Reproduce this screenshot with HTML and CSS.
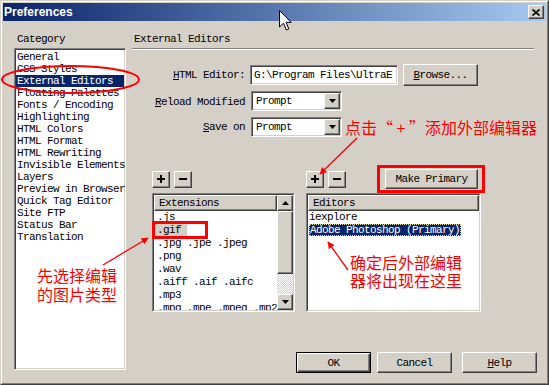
FILE: index.html
```html
<!DOCTYPE html>
<html>
<head>
<meta charset="utf-8">
<link rel="stylesheet" href="styles.css">
</head>
<body>
<div class="window">
  <div class="frame">
    <div class="titlebar">
      <span class="title">Preferences</span>
      <span class="close raised"><svg width="8" height="7" viewBox="0 0 8 7"><path d="M0.5 0.5L7.5 6.5M7.5 0.5L0.5 6.5" stroke="#000" stroke-width="1.6"/></svg></span>
    </div>
    <div class="content">
      <div class="left">
        <div class="label">Category</div>
        <div class="catlist">
          <div class="item">General</div>
          <div class="item">CSS Styles</div>
          <div class="item sel">External Editors</div>
          <div class="item">Floating Palettes</div>
          <div class="item">Fonts / Encoding</div>
          <div class="item">Highlighting</div>
          <div class="item">HTML Colors</div>
          <div class="item">HTML Format</div>
          <div class="item">HTML Rewriting</div>
          <div class="item">Invisible Elements</div>
          <div class="item">Layers</div>
          <div class="item">Preview in Browser</div>
          <div class="item">Quick Tag Editor</div>
          <div class="item">Site FTP</div>
          <div class="item">Status Bar</div>
          <div class="item">Translation</div>
        </div>
      </div>
      <div class="right">
        <div class="heading">External Editors</div>
        <div class="sep"></div>
        <div class="form">
          <div class="flabel"><u>H</u>TML Editor:</div>
          <div class="fctrl">
            <div class="input sunken">G:\Program Files\UltraE</div>
            <div class="btn raised browse"><u>B</u>rowse...</div>
          </div>
          <div class="flabel"><u>R</u>eload Modified</div>
          <div class="fctrl top">
            <div class="select sunken"><span>Prompt</span><span class="arrowbtn raised"><svg width="7" height="4" viewBox="0 0 7 4"><polygon points="0,0 7,0 3.5,4" fill="#000"/></svg></span></div>
          </div>
          <div class="flabel"><u>S</u>ave on</div>
          <div class="fctrl">
            <div class="select sunken"><span>Prompt</span><span class="arrowbtn raised"><svg width="7" height="4" viewBox="0 0 7 4"><polygon points="0,0 7,0 3.5,4" fill="#000"/></svg></span></div>
          </div>
        </div>
        <div class="lists">
          <div class="group ext">
            <div class="tools">
              <span class="tbtn raised"><svg width="10" height="10" viewBox="0 0 10 10"><path d="M4 1h2v3h3v2H6v3H4V6H1V4h3z" fill="#000"/></svg></span>
              <span class="tbtn raised"><svg width="10" height="10" viewBox="0 0 10 10"><path d="M1 4h8v2H1z" fill="#000"/></svg></span>
            </div>
            <div class="listbox">
              <div class="lbinner">
                <div class="lbmain">
                  <div class="hdr">Extensions</div>
                  <div class="row">.js</div>
                  <div class="row"><span class="soft">.gif</span></div>
                  <div class="row">.jpg .jpe .jpeg</div>
                  <div class="row">.png</div>
                  <div class="row">.wav</div>
                  <div class="row">.aiff .aif .aifc</div>
                  <div class="row">.mp3</div>
                  <div class="row">.mpg .mpe .mpeg .mp2</div>
                </div>
                <div class="scroll">
                  <div class="sbtn raised"><svg width="7" height="4" viewBox="0 0 7 4"><polygon points="0,4 7,4 3.5,0" fill="#000"/></svg></div>
                  <div class="thumb raised"></div>
                  <div class="track"></div>
                  <div class="sbtn raised"><svg width="7" height="4" viewBox="0 0 7 4"><polygon points="0,0 7,0 3.5,4" fill="#000"/></svg></div>
                </div>
              </div>
            </div>
          </div>
          <div class="group eds">
            <div class="tools">
              <span class="tbtn raised"><svg width="10" height="10" viewBox="0 0 10 10"><path d="M4 1h2v3h3v2H6v3H4V6H1V4h3z" fill="#000"/></svg></span>
              <span class="tbtn raised"><svg width="10" height="10" viewBox="0 0 10 10"><path d="M1 4h8v2H1z" fill="#000"/></svg></span>
              <span class="btn raised primary">Make Primary</span>
            </div>
            <div class="listbox">
              <div class="lbinner">
                <div class="lbmain">
                  <div class="hdr">Editors</div>
                  <div class="row erow">iexplore</div>
                  <div class="row erow"><span class="hl">Adobe Photoshop (Primary)</span></div>
                </div>
              </div>
            </div>
          </div>
        </div>
        <div class="buttons">
          <div class="btn default ok">OK</div>
          <div class="btn raised cancel">Cancel</div>
          <div class="btn raised"><u>H</u>elp</div>
        </div>
      </div>
    </div>
  </div>
  <div class="annot">
    <svg class="overlay" width="549" height="385" viewBox="0 0 549 385">
      <defs>
        <marker id="ah" viewBox="0 0 10 10" refX="9" refY="5" markerWidth="9" markerHeight="7" orient="auto" markerUnits="userSpaceOnUse">
          <path d="M0,0 L10,5 L0,10 z" fill="#f00"/>
        </marker>
      </defs>
      <ellipse cx="70.5" cy="79.5" rx="68.5" ry="13.5" fill="none" stroke="#f00" stroke-width="2"/>
      <rect x="153.5" y="222.5" width="53" height="15" fill="none" stroke="#f00" stroke-width="3"/>
      <rect x="378.5" y="166.5" width="105" height="25" fill="none" stroke="#f00" stroke-width="3"/>
      <line x1="103" y1="265" x2="148" y2="238" stroke="#f00" stroke-width="1.3" marker-end="url(#ah)"/>
      <line x1="357" y1="138" x2="320" y2="174" stroke="#f00" stroke-width="1.3" marker-end="url(#ah)"/>
      <line x1="348" y1="270" x2="328" y2="242" stroke="#f00" stroke-width="1.3" marker-end="url(#ah)"/>
    </svg>
    <div class="note n1">点击“ + ”添加外部编辑器</div>
    <div class="note n2">确定后外部编辑<br>器将出现在这里</div>
    <div class="note n3">先选择编辑<br>的图片类型</div>
    <svg class="cursor" width="13" height="22" viewBox="0 0 13 22"><path d="M0.5 0.5L0.5 17L4.5 13.2L7.3 20L9.8 19L7.1 12.3L12.2 12.3Z" fill="#fff" stroke="#000" stroke-width="1"/></svg>
  </div>
</div>
</body>
</html>
```

FILE: styles.css
```css
body {
  margin: 0;
  font-family: "Liberation Mono", "DejaVu Sans Mono", monospace;
  font-size: 11px;
  letter-spacing: -0.6px;
  color: #000;
  background: #fff;
}

.window {
  position: relative;
  width: 549px;
  height: 385px;
  box-sizing: border-box;
  border: 1px solid;
  border-color: #d4d0c8 #404040 #404040 #d4d0c8;
  background: #d4d0c8;
  overflow: hidden;
}

.frame {
  height: 100%;
  box-sizing: border-box;
  border: 1px solid;
  border-color: #fff #808080 #808080 #fff;
  padding: 1px;
  display: flex;
  flex-direction: column;
}

.raised {
  box-sizing: border-box;
  background: #d4d0c8;
  border: 1px solid;
  border-color: #fff #404040 #404040 #fff;
  box-shadow: inset -1px -1px #808080;
}

.sunken {
  box-sizing: border-box;
  background: #fff;
  border: 1px solid;
  border-color: #808080 #fff #fff #808080;
  box-shadow: inset 1px 1px #404040, inset -1px -1px #d4d0c8;
}

.titlebar {
  height: 18px;
  flex: none;
  background: linear-gradient(to right, #0a246a, #a6caf0);
  display: flex;
  align-items: center;
  justify-content: space-between;
  padding: 0 2px 0 1px;
}

.title {
  font: bold 12px "Liberation Sans", Arial, sans-serif;
  letter-spacing: 0;
  color: #fff;
}

.close {
  width: 16px;
  height: 14px;
  display: flex;
  align-items: center;
  justify-content: center;
}

.content {
  display: flex;
  flex: 1;
}

.left {
  margin-left: 11px;
  width: 112px;
}

.label {
  margin-top: 12px;
  height: 12px;
  line-height: 12px;
  padding-left: 3px;
}

.catlist {
  margin-top: 3px;
  height: 322px;
  box-sizing: border-box;
  background: #fff;
  border: 1px solid;
  border-color: #808080 #fff #fff #808080;
  box-shadow: inset 1px 1px #404040, inset -1px -1px #d4d0c8;
  padding: 2px 0 0 1px;
  overflow: hidden;
}

.item {
  height: 12px;
  line-height: 12px;
  padding-left: 1px;
  margin-right: 1px;
  white-space: nowrap;
}

.item.sel {
  background: #0a246a;
  color: #fff;
}

.right {
  margin-left: 6px;
  width: 405px;
  display: flex;
  flex-direction: column;
}

.heading {
  margin-top: 12px;
  height: 12px;
  line-height: 12px;
  padding-left: 2px;
}

.sep {
  margin-top: 3px;
  width: 402px;
  border-top: 1px solid #808080;
  border-bottom: 1px solid #fff;
}

.form {
  margin-top: 14px;
  display: grid;
  grid-template-columns: 113px auto;
  grid-template-rows: 22px 21px 20px;
  row-gap: 5px;
  column-gap: 5px;
  align-items: center;
}

.flabel {
  text-align: right;
  white-space: nowrap;
  line-height: 12px;
}

.fctrl {
  display: flex;
  align-items: center;
}

.fctrl.top {
  align-self: start;
}

.input {
  width: 148px;
  height: 20px;
  padding: 0 2px 0 3px;
  line-height: 18px;
  white-space: nowrap;
  overflow: hidden;
}

.btn {
  display: flex;
  align-items: center;
  justify-content: center;
  white-space: nowrap;
  width: 75px;
  height: 21px;
}

.browse {
  margin-left: 5px;
  height: 22px;
}

.select {
  margin-left: 1px;
  width: 91px;
  height: 20px;
  padding: 1px 1px 1px 4px;
  display: flex;
  align-items: center;
  justify-content: space-between;
}

.arrowbtn {
  width: 16px;
  height: 16px;
  display: flex;
  align-items: center;
  justify-content: center;
}

.lists {
  margin-top: 32px;
  margin-left: 20px;
  display: flex;
  gap: 11px;
}

.ext {
  width: 143px;
}

.eds {
  width: 175px;
}

.tools {
  height: 20px;
  display: flex;
  align-items: center;
  gap: 4px;
}

.tbtn {
  width: 18px;
  height: 17px;
  display: flex;
  align-items: center;
  justify-content: center;
}

.primary {
  margin-left: auto;
  margin-right: 3px;
  width: 93px;
  height: 20px;
}

.listbox {
  margin-top: 4px;
  height: 119px;
  box-sizing: border-box;
  border: 1px solid;
  border-color: #808080 #fff #fff #808080;
}

.lbinner {
  height: 100%;
  box-sizing: border-box;
  border: 1px solid;
  border-color: #404040 #d4d0c8 #d4d0c8 #404040;
  background: #fff;
  display: flex;
  overflow: hidden;
}

.lbmain {
  flex: 1;
  min-width: 0;
  overflow: hidden;
}

.hdr {
  height: 16px;
  box-sizing: border-box;
  background: #d4d0c8;
  border: 1px solid;
  border-color: #fff #404040 #404040 #fff;
  box-shadow: inset -1px -1px #808080;
  line-height: 14px;
  padding-left: 4px;
}

.row {
  height: 13px;
  line-height: 13px;
  padding-left: 3px;
  white-space: nowrap;
}

.row.erow {
  padding-left: 1px;
}

.soft {
  display: inline-block;
  background: #d4d0c8;
  margin-left: -2px;
  padding: 0 6px 0 2px;
  line-height: 12px;
}

.hl {
  display: inline-block;
  background: #0a246a;
  color: #fff;
  padding: 0 1px;
  line-height: 12px;
  outline: 1px dotted #d8d8a8;
  outline-offset: -1px;
}

.scroll {
  width: 16px;
  flex: none;
  display: flex;
  flex-direction: column;
}

.sbtn {
  height: 16px;
  display: flex;
  align-items: center;
  justify-content: center;
}

.thumb {
  height: 63px;
}

.track {
  flex: 1;
  background-image: repeating-conic-gradient(#fff 0 25%, #d4d0c8 0 50%);
  background-size: 2px 2px;
}

.buttons {
  margin-top: 40px;
  display: flex;
  justify-content: flex-end;
}

.default {
  box-sizing: border-box;
  background: #d4d0c8;
  border: 1px solid #000;
  box-shadow: inset 1px 1px #fff, inset -1px -1px #404040, inset -2px -2px #808080;
}

.ok {
  margin-right: 6px;
}

.cancel {
  margin-right: 10px;
}

.annot {
  position: absolute;
  left: -1px;
  top: -1px;
  width: 549px;
  height: 385px;
  pointer-events: none;
}

.overlay {
  position: absolute;
  left: 0;
  top: 0;
}

.note {
  position: absolute;
  color: #f00;
  font-family: "Noto Sans CJK SC", sans-serif;
  font-size: 16px;
  line-height: 18px;
  letter-spacing: 0;
  white-space: nowrap;
}

.n1 {
  left: 345px;
  top: 118px;
}

.n2 {
  left: 350px;
  top: 253px;
}

.n3 {
  left: 37px;
  top: 266px;
  line-height: 19px;
}

.cursor {
  position: absolute;
  left: 279px;
  top: 10px;
}
```
